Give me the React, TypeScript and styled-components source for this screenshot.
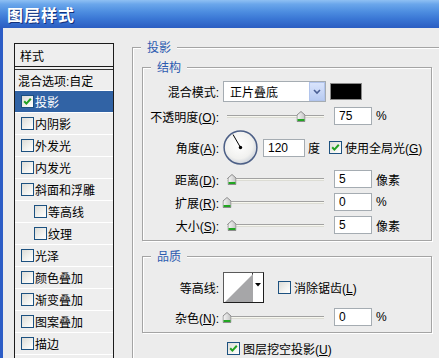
import React from "react";
import styled, { createGlobalStyle } from "styled-components";

const GlobalStyle = createGlobalStyle`
  html, body { margin: 0; padding: 0; background: #ececec; overflow: hidden; }
  body { font-family: "Liberation Sans", "Noto Sans CJK SC", sans-serif; font-size: 12px; color: #000; }
  * { box-sizing: border-box; }
`;

const Window = styled.div`
  width: 439px;
  height: 358px;
  display: flex;
  flex-direction: column;
  overflow: hidden;
  background: #ececec;
`;

const TitleBar = styled.div`
  flex: none;
  height: 28px;
  display: flex;
  align-items: center;
  padding-left: 7px;
  background: linear-gradient(to bottom, #8fc0f3 0%, #6aa6eb 15%, #4d8de0 42%, #3a76d4 68%, #2b5dc2 100%);
  color: #fff;
  font: bold 16px "Noto Sans CJK SC", sans-serif;
  letter-spacing: 1px;
  text-shadow: 1px 1px 0 #13307a;
`;

const Body = styled.div`
  flex: 1;
  min-height: 0;
  display: flex;
  align-items: flex-start;
  gap: 18px;
  padding-left: 11px;
  border-left: 3px solid #2d5dc6;
`;

/* ---------- left style list ---------- */
const StyleList = styled.div`
  flex: none;
  width: 100px;
  margin-top: 15px;
  border: 1px solid #1b1b1b;
  background: #eeeeee;
`;

const ListHeader = styled.div`
  height: 23px;
  padding-left: 5px;
  display: flex;
  align-items: center;
  border-bottom: 1px solid #1b1b1b;
`;

const ListGap = styled.div`
  height: 3px;
  border-bottom: 1px solid #333;
`;

const ListRow = styled.div<{ $selected?: boolean; $indent: number; $h?: number }>`
  height: ${(p) => p.$h ?? 22}px;
  display: flex;
  align-items: center;
  gap: 1px;
  padding-left: ${(p) => p.$indent}px;
  border-bottom: 1px solid #ffffff;
  background: ${(p) => (p.$selected ? "#3163a5" : "transparent")};
  color: ${(p) => (p.$selected ? "#fff" : "#000")};
  white-space: nowrap;
`;

/* ---------- checkbox ---------- */
const Box = styled.span`
  flex: none;
  width: 13px;
  height: 13px;
  border: 1px solid #1c5180;
  background: linear-gradient(135deg, #dcdcd7 0%, #f3f3f0 60%, #ffffff 100%);
  display: inline-flex;
  align-items: center;
  justify-content: center;
`;

const Check = ({ checked }: { checked?: boolean }) => (
  <Box>
    {checked && (
      <svg width="9" height="9" viewBox="0 0 9 9">
        <path d="M1.2 4.2 L3.4 6.6 L7.8 1.8" fill="none" stroke="#21a121" strokeWidth="2" />
      </svg>
    )}
  </Box>
);

const CheckLabel = styled.div<{ $ml?: number }>`
  display: flex;
  align-items: center;
  gap: 3px;
  margin-left: ${(p) => p.$ml ?? 0}px;
  white-space: nowrap;
`;

/* ---------- group boxes ---------- */
const Group = styled.div<{ $pt: number; $pb: number; $px: number }>`
  position: relative;
  border: 1px solid #a4a4a4;
  box-shadow: inset 1px 1px 0 #ffffff, 1px 1px 0 #ffffff;
  padding: ${(p) => p.$pt}px ${(p) => p.$px}px ${(p) => p.$pb}px;
  display: flex;
  flex-direction: column;
`;

const OuterGroup = styled(Group)`
  flex: none;
  width: 310px;
  height: 360px;
  margin-top: 19px;
`;

const GroupTitle = styled.span`
  position: absolute;
  top: -8px;
  left: 8px;
  padding: 0 6px;
  line-height: 14px;
  background: #ececec;
  color: #2d5bb0;
  font-family: "Noto Sans CJK SC", sans-serif;
`;

const Stack = styled.div`
  display: flex;
  flex-direction: column;
  gap: 5px;
`;

const Field = styled.div<{ $h: number }>`
  display: grid;
  grid-template-columns: 76px auto;
  column-gap: 4px;
  align-items: center;
  height: ${(p) => p.$h}px;
`;

const Label = styled.span`
  text-align: right;
  white-space: nowrap;
`;

const Controls = styled.div<{ $gap: number }>`
  display: flex;
  align-items: center;
  gap: ${(p) => p.$gap}px;
`;

const ValueGroup = styled.div<{ $gap?: number }>`
  display: flex;
  align-items: center;
  gap: ${(p) => p.$gap ?? 4}px;
  white-space: nowrap;
`;

const NumInput = styled.div<{ $w?: number }>`
  width: ${(p) => p.$w ?? 38}px;
  height: 18px;
  border: 1px solid #a5acb2;
  background: #fff;
  padding-left: 4px;
  display: flex;
  align-items: center;
  font-size: 12px;
`;

/* ---------- select ---------- */
const Select = styled.div`
  width: 103px;
  height: 21px;
  border: 1px solid #a5acb2;
  background: #fff;
  display: flex;
  align-items: center;
  justify-content: space-between;
  padding-left: 6px;
`;

const SelectButton = styled.span`
  width: 16px;
  height: 19px;
  border: 1px solid #b1c4ec;
  background: linear-gradient(to bottom, #d9e4fb, #b8cbf2);
  display: flex;
  align-items: center;
  justify-content: center;
`;

const Swatch = styled.div`
  width: 32px;
  height: 17px;
  border: 1px solid #8a8a8a;
  background: #000;
`;

/* ---------- slider ---------- */
const Slider = styled.div`
  width: 103px;
  height: 18px;
  padding-left: 4px;
  padding-right: 2px;
  display: flex;
  align-items: center;
`;

const Track = styled.div`
  position: relative;
  flex: 1;
  height: 3px;
  border-top: 1px solid #a2a2a2;
  border-bottom: 1px solid #dcdcd4;
  background: #f7f7ef;
`;

const Thumb = styled.span`
  position: absolute;
  top: -5px;
  width: 9px;
  height: 11px;
  transform: translateX(-50%);
  display: block;
`;

const SliderCtl = ({ pos }: { pos: number }) => (
  <Slider>
    <Track>
      <Thumb style={{ left: `${pos}%` }}>
        <svg width="9" height="11" viewBox="0 0 9 11">
          <defs>
            <linearGradient id="thumbGrad" x1="0" y1="0" x2="1" y2="0">
              <stop offset="0" stopColor="#f7f7f7" />
              <stop offset="1" stopColor="#c4c4c4" />
            </linearGradient>
          </defs>
          <path d="M0.5 4 L4.5 0.5 L8.5 4 L8.5 10.5 L0.5 10.5 Z" fill="url(#thumbGrad)" stroke="#8c8c8c" />
          <rect x="1" y="8" width="7" height="2" fill="#22a622" />
        </svg>
      </Thumb>
    </Track>
  </Slider>
);

/* ---------- contour picker ---------- */
const Contour = styled.div`
  width: 41px;
  height: 31px;
  display: flex;
  border: 1px solid;
  border-color: #5a5a5a #1e1e1e #1e1e1e #5a5a5a;
  background: #fff;
`;

const ContourPreview = styled.div`
  width: 29px;
  padding: 1px 0 0 1px;
  border-right: 1px solid #3a3a3a;
`;

const ContourArrow = styled.div`
  flex: 1;
  display: flex;
  align-items: flex-start;
  justify-content: center;
  padding-top: 10px;
`;

const BottomRow = styled.div`
  margin-top: 7px;
  padding-left: 85px;
`;

const U = styled.u`
  text-underline-offset: 1px;
`;

const listItems: { label: string; checked?: boolean; selected?: boolean; sub?: boolean }[] = [
  { label: "投影", checked: true, selected: true },
  { label: "内阴影" },
  { label: "外发光" },
  { label: "内发光" },
  { label: "斜面和浮雕" },
  { label: "等高线", sub: true },
  { label: "纹理", sub: true },
  { label: "光泽" },
  { label: "颜色叠加" },
  { label: "渐变叠加" },
  { label: "图案叠加" },
  { label: "描边" },
  { label: "" },
];

export default function App() {
  return (
    <>
      <GlobalStyle />
      <Window>
        <TitleBar>图层样式</TitleBar>
        <Body>
          <StyleList>
            <ListHeader>样式</ListHeader>
            <ListGap />
            <ListRow $indent={3} $h={21}>混合选项:自定</ListRow>
            {listItems.map((it, i) => (
              <ListRow key={i} $indent={it.sub ? 19 : 6} $selected={it.selected}>
                {it.label && <Check checked={it.checked} />}
                {it.label}
              </ListRow>
            ))}
          </StyleList>

          <OuterGroup $pt={19} $pb={0} $px={9}>
            <GroupTitle>投影</GroupTitle>

            <Group $pt={13} $pb={6} $px={0}>
              <GroupTitle>结构</GroupTitle>
              <Stack>
                <Field $h={21}>
                  <Label>混合模式:</Label>
                  <Controls $gap={4}>
                    <Select>
                      正片叠底
                      <SelectButton>
                        <svg width="8" height="6" viewBox="0 0 8 6">
                          <path d="M1 1 L4 4 L7 1" fill="none" stroke="#4a5f94" strokeWidth="1.6" />
                        </svg>
                      </SelectButton>
                    </Select>
                    <Swatch />
                  </Controls>
                </Field>

                <Field $h={18}>
                  <Label>
                    不透明度(<U>O</U>):
                  </Label>
                  <Controls $gap={8}>
                    <SliderCtl pos={76} />
                    <ValueGroup>
                      <NumInput>75</NumInput>%
                    </ValueGroup>
                  </Controls>
                </Field>

                <Field $h={35}>
                  <Label>
                    角度(<U>A</U>):
                  </Label>
                  <Controls $gap={5}>
                    <svg width="35" height="35" viewBox="0 0 35 35">
                      <defs>
                        <radialGradient id="dialGrad" cx="45%" cy="42%" r="60%">
                          <stop offset="0" stopColor="#ffffff" />
                          <stop offset="0.7" stopColor="#f1f1ef" />
                          <stop offset="1" stopColor="#cdd2da" />
                        </radialGradient>
                      </defs>
                      <circle cx="17.5" cy="17.5" r="16.4" fill="url(#dialGrad)" stroke="#4c5f86" strokeWidth="1.5" />
                      <line x1="17.5" y1="17.5" x2="10" y2="4.5" stroke="#000" strokeWidth="1" />
                      <circle cx="17.5" cy="17.5" r="1.7" fill="#000" />
                    </svg>
                    <ValueGroup $gap={3}>
                      <NumInput $w={42}>120</NumInput>度
                    </ValueGroup>
                    <CheckLabel $ml={4}>
                      <Check checked />
                      <span>
                        使用全局光(<U>G</U>)
                      </span>
                    </CheckLabel>
                  </Controls>
                </Field>

                <Field $h={18}>
                  <Label>
                    距离(<U>D</U>):
                  </Label>
                  <Controls $gap={8}>
                    <SliderCtl pos={5.5} />
                    <ValueGroup>
                      <NumInput>5</NumInput>像素
                    </ValueGroup>
                  </Controls>
                </Field>

                <Field $h={18}>
                  <Label>
                    扩展(<U>R</U>):
                  </Label>
                  <Controls $gap={8}>
                    <SliderCtl pos={0.5} />
                    <ValueGroup>
                      <NumInput>0</NumInput>%
                    </ValueGroup>
                  </Controls>
                </Field>

                <Field $h={18}>
                  <Label>
                    大小(<U>S</U>):
                  </Label>
                  <Controls $gap={8}>
                    <SliderCtl pos={5.5} />
                    <ValueGroup>
                      <NumInput>5</NumInput>像素
                    </ValueGroup>
                  </Controls>
                </Field>
              </Stack>
            </Group>

            <Group $pt={15} $pb={6} $px={0} style={{ marginTop: 15 }}>
              <GroupTitle>品质</GroupTitle>
              <Stack>
                <Field $h={31}>
                  <Label>等高线:</Label>
                  <Controls $gap={14}>
                    <Contour>
                      <ContourPreview>
                        <svg width="28" height="28" viewBox="0 0 28 28">
                          <path d="M0 28 L28 0 L28 28 Z" fill="#a6a6a8" />
                        </svg>
                      </ContourPreview>
                      <ContourArrow>
                        <svg width="6" height="4" viewBox="0 0 6 4">
                          <path d="M0 0 L6 0 L3 3.5 Z" fill="#000" />
                        </svg>
                      </ContourArrow>
                    </Contour>
                    <CheckLabel>
                      <Check />
                      <span>
                        消除锯齿(<U>L</U>)
                      </span>
                    </CheckLabel>
                  </Controls>
                </Field>

                <Field $h={18}>
                  <Label>
                    杂色(<U>N</U>):
                  </Label>
                  <Controls $gap={8}>
                    <SliderCtl pos={0.5} />
                    <ValueGroup>
                      <NumInput>0</NumInput>%
                    </ValueGroup>
                  </Controls>
                </Field>
              </Stack>
            </Group>

            <BottomRow>
              <CheckLabel>
                <Check checked />
                <span>
                  图层挖空投影(<U>U</U>)
                </span>
              </CheckLabel>
            </BottomRow>
          </OuterGroup>
        </Body>
      </Window>
    </>
  );
}
